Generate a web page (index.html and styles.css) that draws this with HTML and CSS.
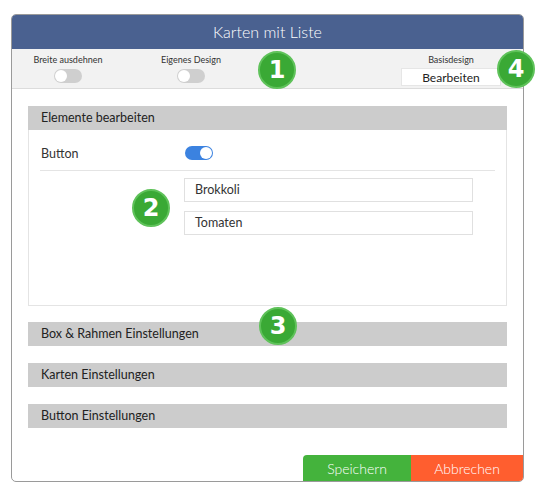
FILE: index.html
```html
<!DOCTYPE html>
<html lang="de">
<head>
  <meta charset="UTF-8" />
  <title>Karten mit Liste</title>
  <link rel="stylesheet" href="styles.css">
</head>
<body>
  <div class="dialog">
    <div class="dialog-title">Karten mit Liste</div>

    <div class="toolbar">
      <div class="tool">
        <div class="tool-label">Breite ausdehnen</div>
        <span class="switch"></span>
      </div>
      <div class="tool">
        <div class="tool-label">Eigenes Design</div>
        <span class="switch"></span>
      </div>
      <div class="tool tool-right">
        <div class="tool-label">Basisdesign</div>
        <button class="edit-btn">Bearbeiten</button>
      </div>
    </div>

    <div class="content">
      <div class="panel">
        <div class="section-head">Elemente bearbeiten</div>
        <div class="panel-body">
          <div class="row">
            <span class="row-label">Button</span>
            <span class="switch on"></span>
          </div>
          <div class="list">
            <div class="list-item">Brokkoli</div>
            <div class="list-item">Tomaten</div>
          </div>
        </div>
      </div>

      <div class="section-head section">Box &amp; Rahmen Einstellungen</div>
      <div class="section-head section">Karten Einstellungen</div>
      <div class="section-head section">Button Einstellungen</div>
    </div>

    <div class="footer">
      <button class="btn save">Speichern</button>
      <button class="btn cancel">Abbrechen</button>
    </div>

    <span class="badge b1">1</span>
    <span class="badge b2">2</span>
    <span class="badge b3">3</span>
    <span class="badge b4">4</span>
  </div>
</body>
</html>
```

FILE: styles.css
```css
html, body {
  margin: 0;
  padding: 0;
  background: #ffffff;
  font-family: 'Lato', 'Open Sans', sans-serif;
  color: #333;
}

.dialog {
  position: relative;
  margin: 14px 0 0 11px;
  width: 511px;
  height: 466px;
  border: 1px solid #9a9a9a;
  border-radius: 5px;
  display: flex;
  flex-direction: column;
  background: #fff;
}

.dialog-title {
  height: 34px;
  line-height: 34px;
  background-color: #4a6190;
  border-radius: 4px 4px 0 0;
  color: #fff;
  text-align: center;
  font-size: 16px;
  font-weight: 300;
}

.toolbar {
  height: 39px;
  background: #f2f2f2;
  border-bottom: 1px solid #dcdcdc;
  display: flex;
  gap: 23px;
  padding: 0 22px 0 6px;
}

.tool {
  width: 100px;
  display: flex;
  flex-direction: column;
  align-items: center;
  padding-top: 5px;
}

.tool-right {
  margin-left: auto;
}

.tool-label {
  font-size: 9px;
  line-height: 11px;
  color: #333;
  margin-bottom: 4px;
}

.switch {
  position: relative;
  display: inline-block;
  width: 28px;
  height: 14px;
  border-radius: 7px;
  background-color: #cfcfcf;
}

.switch:before {
  content: "";
  position: absolute;
  left: 1px;
  top: 1px;
  width: 12px;
  height: 12px;
  border-radius: 50%;
  background: #fff;
}

.switch.on {
  background-color: #3b82e0;
}

.switch.on:before {
  left: auto;
  right: 1px;
}

.edit-btn {
  width: 100px;
  height: 18px;
  padding: 0;
  margin-top: -1px;
  background: #fff;
  border: 1px solid #e6e6e6;
  font-family: inherit;
  font-size: 12px;
  color: #222;
  cursor: pointer;
}

.content {
  padding: 17px 16px 0 16px;
}

.section-head {
  height: 24px;
  line-height: 24px;
  background: #cccccc;
  padding-left: 13px;
  font-size: 12.5px;
  color: #222;
}

.section {
  margin-top: 16px;
}

.section + .section {
  margin-top: 17px;
}

.panel-body {
  height: 175px;
  border: 1px solid #e4e4e4;
  border-top: none;
}

.row {
  height: 34px;
  padding-top: 6px;
  margin: 0 11px;
  border-bottom: 1px solid #e4e4e4;
  display: flex;
  align-items: center;
}

.row-label {
  width: 144px;
  padding-left: 1px;
  font-size: 12.5px;
}

.list {
  margin: 7px 0 0 155px;
  display: flex;
  flex-direction: column;
  gap: 9px;
}

.list-item {
  width: 277px;
  height: 22px;
  line-height: 22px;
  padding-left: 10px;
  border: 1px solid #e0e0e0;
  font-size: 12.5px;
}

.footer {
  margin-top: auto;
  display: flex;
  justify-content: flex-end;
}

.btn {
  height: 26px;
  border: none;
  padding: 0;
  color: #fff;
  font-family: inherit;
  font-size: 14px;
  font-weight: 300;
  cursor: pointer;
}

.save {
  width: 108px;
  background-color: #44b33c;
  border-top-left-radius: 4px;
}

.cancel {
  width: 112px;
  background-color: #ff5e2f;
  border-bottom-right-radius: 4px;
}

.badge {
  position: absolute;
  width: 34px;
  height: 34px;
  line-height: 34px;
  border-radius: 50%;
  background-color: #3aa935;
  border: 2px solid #5fc25a;
  color: #fff;
  text-align: center;
  font-family: 'DejaVu Sans', sans-serif;
  font-weight: bold;
  font-size: 24px;
}

.b1 { left: 246px; top: 36px; }
.b2 { left: 120px; top: 174px; }
.b3 { left: 247px; top: 292px; }
.b4 { left: 485px; top: 35px; }
```
